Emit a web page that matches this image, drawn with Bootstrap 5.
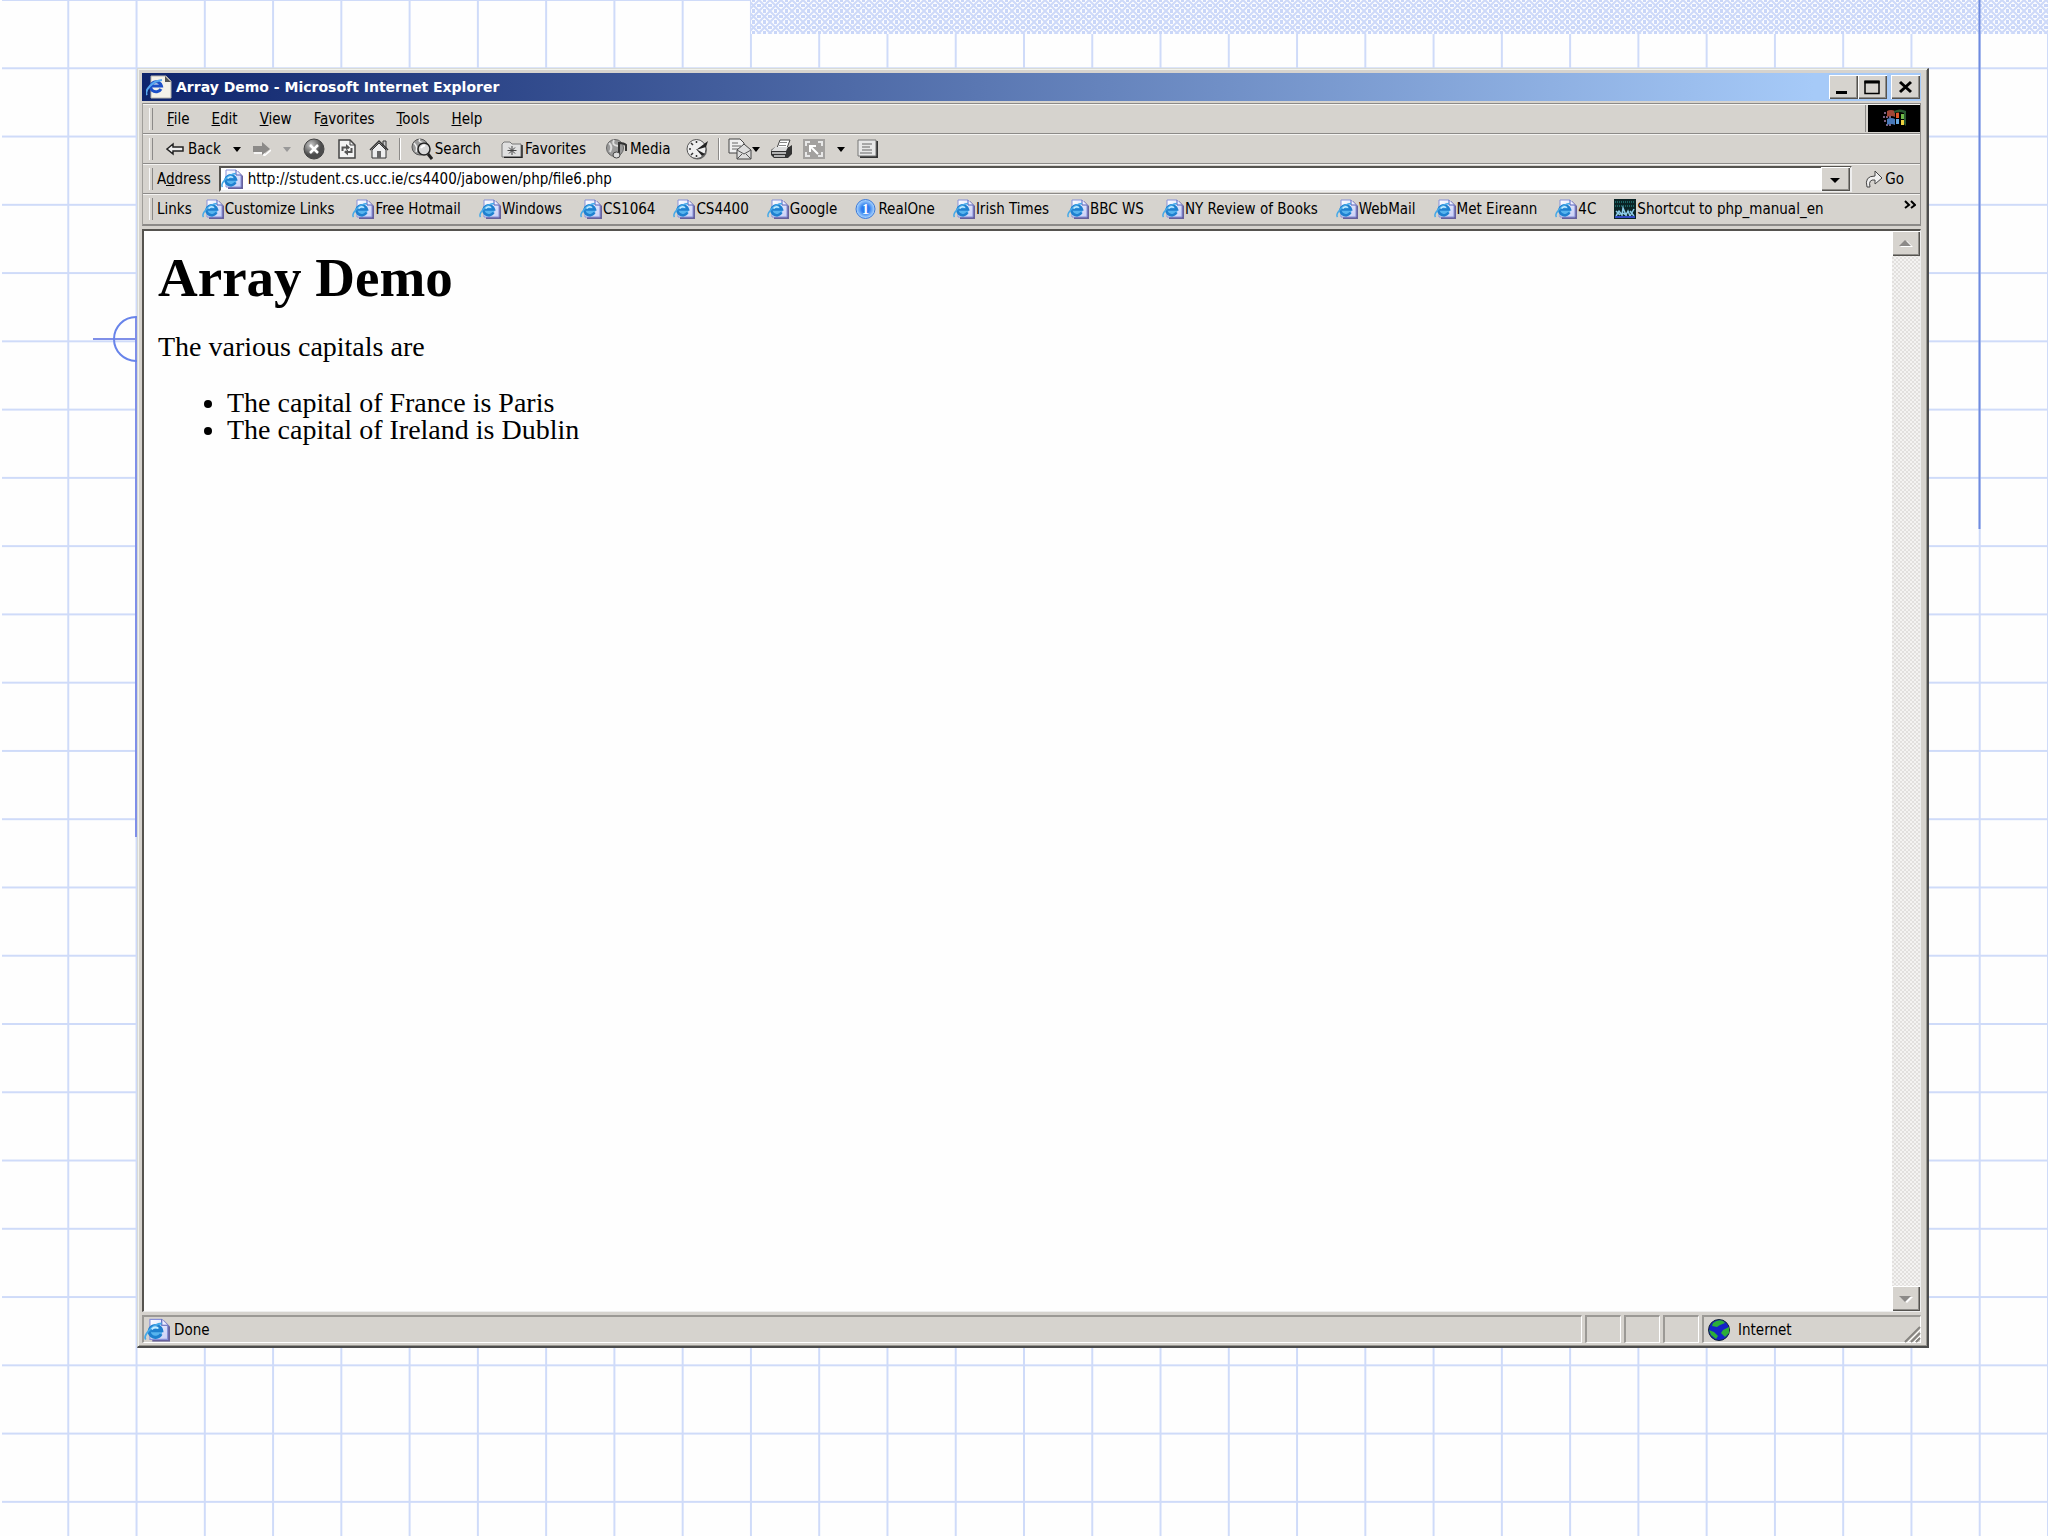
<!DOCTYPE html>
<html lang="en">
<head>
<meta charset="utf-8">
<meta name="viewport" content="width=device-width, initial-scale=1">
<title>Array Demo - Microsoft Internet Explorer</title>
<link href="https://cdn.jsdelivr.net/npm/bootstrap@5.3.0/dist/css/bootstrap.min.css" rel="stylesheet">
<style>
  :root { --cell: calc(100vw / 30); --face: #d6d3ce; --shade: #8c8a88; --dark: #55534f; }
  body {
    font-family: "DejaVu Sans Condensed", "DejaVu Sans", sans-serif; font-stretch: condensed;
    font-size: 15px; line-height: 20px; color: #000;
    background-color: #fefefe;
    background-image:
      linear-gradient(to left, #cfdbf9 2px, transparent 2px),
      linear-gradient(to top, #cfdbf9 2px, transparent 2px);
    background-size: var(--cell) var(--cell);
    background-position: 1px 1px;
    padding: 68px 119px 188px 137px;
  }
  .backdrop { z-index: 0; pointer-events: none; }
  .ie-window {
    z-index: 1; background: var(--face); padding: 4px 6px 3px 4px;
    border: 1px solid #d8dad6; border-right: 2px solid #4c4c4c; border-bottom: 2px solid #4c4c4c;
    box-shadow: inset 1px 1px #f1f3ee, inset -1px -1px #98968f;
  }
  .titlebar { height: 28px; background: linear-gradient(to right, #0e246c, #a6caf8 94%); color: #fff; font-family: "DejaVu Sans", sans-serif; font-stretch: normal; font-size: 14px; font-weight: 700; padding: 0 1px 0 4px; }
  button { font: inherit; color: inherit; background: none; border: 0; padding: 0; }
  .cap-btn, .bevel { width: 29px; height: 24px; background: var(--face); box-shadow: inset 1px 1px #fff, inset -1px -1px #55534f, inset -2px -2px #8f8d89; }
  .strip { height: 30px; padding-left: 6px; border-bottom: 1px solid var(--shade); box-shadow: inset 0 1px #f5f4f2; }
  .strip::before { content: ""; flex: none; width: 4px; height: 22px; border-right: 1px solid var(--shade); box-shadow: inset 1px 0 #f8f8f8; }
  .bars { border: 1px solid var(--shade); border-bottom: 2px solid #8c8a88; border-left-color: #a09e9a; margin-top: 2px; }
  .menus { gap: 22px; padding-left: 14px; }
  .tool { margin-left: 13px; }
  .tool-near { margin-left: 10px; }
  .tool-wide { margin-left: 20px; }
  .tool-text { gap: 2px; }
  .brand { width: 52px; height: 27px; background: #000; }
  .brandbox { border-left: 1px solid var(--shade); padding-left: 2px; }
  .divider { width: 2px; height: 22px; margin: 0 10px; background: linear-gradient(to right, var(--shade) 50%, #fff 50%); }
  .addr { height: 26px; background: #fff; border: 2px solid var(--dark); border-right-color: #eee; border-bottom-color: #eee; }
  .addr input { border: 0; outline: 0; padding: 0 0 0 5px; background: transparent; font: inherit; min-width: 0; }
  .links { gap: 18px; padding-left: 10px; }
  .links a { color: #000; text-decoration: none; white-space: nowrap; display: flex; align-items: center; gap: 1px; }
  .badge-one { font-family: "Liberation Serif", serif; font-size: 14px; font-weight: 700; fill: #fff; }
  .viewport { border: 2px solid var(--dark); border-right: 1px solid #eee; border-bottom: 1px solid #eee; background: #fefefe; margin-top: 3px; }
  .doc { font-family: "Liberation Serif", serif; font-stretch: normal; font-size: 28px; line-height: 27px; padding: 16px 14px; }
  .doc h1 { font-size: 55px; line-height: 62px; font-weight: 700; margin: 0 0 24px; }
  .doc p { margin: 0 0 29px; }
  .doc ul { padding-left: 69px; margin: 0; }
  .scroller { width: 28px; background: repeating-conic-gradient(#e2e0de 0 25%, #f4f3f2 0 50%) 0 0 / 4px 4px; }
  .scroller .bevel { width: 28px; height: 25px; }
  .status { gap: 3px; margin-top: 3px; height: 28px; }
  .pane { border: 1px solid #fff; border-top: 2px solid #9b9995; border-left: 2px solid #9b9995; }
  .pane-sm { width: 36px; }
  .pane-zone { width: 219px; }
  .grip { right: 0; bottom: 0; }
</style>
<script src="https://cdn.jsdelivr.net/npm/bootstrap@5.3.0/dist/js/bootstrap.bundle.min.js"></script>
</head>
<body class="min-vh-100 d-flex flex-column position-relative m-0">

<svg width="0" height="0" class="position-absolute" aria-hidden="true">
  <defs>
    <pattern id="weave" width="11" height="11" patternUnits="userSpaceOnUse">
      <rect width="11" height="11" fill="#fbfcff"/>
      <path d="M0 0L11 11M11 0L0 11" stroke="#cdd9f9" stroke-width="2"/>
      <path d="M4 0h3v2h-3zM4 9h3v2h-3zM0 4h2v3H0zM9 4h2v3H9z" fill="#c9d6f8"/>
    </pattern>
    <linearGradient id="pg" x1="0" x2="1" y2="1"><stop offset="0" stop-color="#fff"/><stop offset="1" stop-color="#c6cdf6"/></linearGradient>
    <radialGradient id="ball" cx=".35" cy=".3"><stop offset="0" stop-color="#ccc"/><stop offset="1" stop-color="#4c4c4c"/></radialGradient>
    <radialGradient id="one" cx=".5" cy=".5"><stop offset=".4" stop-color="#2c7cf0"/><stop offset="1" stop-color="#b4dcff"/></radialGradient>
    <symbol id="ie" viewBox="0 0 22 20">
      <path d="M7 2h10l5 5v13H7z" fill="#66619c"/>
      <path d="M5 1h10l5 5v12H5z" fill="url(#pg)" stroke="#8790d8"/>
      <path d="M15 1v5h5" fill="#eef" stroke="#5560b8"/>
      <circle cx="9.500" cy="11.500" r="6" fill="#58b4ee"/>
      <path d="M14.500 13.500A5.300 5 0 1 1 15 10.500H6" fill="none" stroke="#1f80cf" stroke-width="2.600"/>
      <path d="M1.500 18C-1 15 7 5 15 4.500" fill="none" stroke="#45a9e8" stroke-width="1.500"/>
      <path d="M6.500 9.500Q9 6.500 12 8.500" fill="none" stroke="#c4ecff" stroke-width="1.500"/>
    </symbol>
  </defs>
</svg>

<svg class="backdrop position-absolute top-0 start-0 w-100 h-100" aria-hidden="true">
  <rect width="2" height="100%" fill="#fefefe"/>
  <rect x="751" width="1297" height="34" fill="url(#weave)"/>
  <path d="M1979.500 0V529" stroke="#6f8be0" stroke-width="2"/>
  <path d="M93 339H136M136 317V837" stroke="#7f8fe8" stroke-width="2"/>
  <circle cx="136" cy="339" r="22" fill="none" stroke="#6884ea" stroke-width="2"/>
</svg>

<main class="ie-window position-relative flex-grow-1 d-flex flex-column">
  <header class="titlebar d-flex align-items-center">
    <svg width="26" height="24" viewBox="0 0 26 24" aria-hidden="true"><path d="M5 1h15l5 5v17H5z" fill="#f4f2ea" stroke="#b8b6ae"/><path d="M19 1v6h6" fill="#555"/><path d="M15 14A5.500 5 0 1 1 15.500 11H6" fill="none" stroke="#1c50c8" stroke-width="3"/><path d="M1 20C-2 16 6 6 16 5" fill="none" stroke="#58a8f0" stroke-width="2"/></svg>
    <span class="ms-1 flex-grow-1">Array Demo - Microsoft Internet Explorer</span>
    <button class="cap-btn" aria-label="Minimize"><svg class="d-block" width="28" height="24"><path d="M7 17.500h11" stroke="#000" stroke-width="3"/></svg></button>
    <button class="cap-btn" aria-label="Maximize"><svg class="d-block" width="28" height="24"><path d="M7 6.500h14v12H7z" fill="none" stroke="#000" stroke-width="1.500"/><path d="M6.500 7h15" stroke="#000" stroke-width="3"/></svg></button>
    <button class="cap-btn ms-1" aria-label="Close"><svg class="d-block" width="28" height="24"><path d="M9 7l11 10M20 7L9 17" stroke="#000" stroke-width="3"/></svg></button>
  </header>

  <div class="bars">
    <div class="strip d-flex align-items-center">
      <nav class="menus d-flex flex-grow-1" aria-label="Menu bar">
        <button><u>F</u>ile</button><button><u>E</u>dit</button><button><u>V</u>iew</button><button>F<u>a</u>vorites</button><button><u>T</u>ools</button><button><u>H</u>elp</button>
      </nav>
      <div class="brandbox"><svg class="brand d-block" viewBox="0 0 52 27" role="img" aria-label="Windows"><path d="M16 8h8M15 12h9M16 16h8M18 20h6" stroke="#7a6080" stroke-width="2" stroke-dasharray="2 1"/><path d="M19 6q4-2 8 0v6q-4-2-8 0z" fill="#a04838"/><path d="M19 14q4-2 8 0v6q-4-2-8 0z" fill="#4878b8"/><path d="M26 6q6-3 12 0v15l-2-2V8q-5-2-10 0z" fill="#285830"/><path d="M28 8q3-1 3 0v5h-3z" fill="#e05828"/><path d="M33 9h3v5h-3z" fill="#70b848"/><path d="M28 14h3v5h-3z" fill="#68a8e0"/><path d="M33 15h3v5h-3z" fill="#ecd040"/></svg></div>
    </div>

    <div class="strip d-flex align-items-center">
      <button class="d-flex align-items-center tool"><svg class="me-1" width="18" height="14" viewBox="0 0 18 14"><path d="M1 7l6-5v3h10v4H7v3z" fill="#eee" stroke="#222" stroke-width="1.500"/></svg>Back</button>
      <button class="ms-2" aria-label="Back history"><svg class="mx-1" width="8" height="5"><path d="M0 0h8L4 5z"/></svg></button>
      <button class="ms-2" aria-label="Forward"><svg width="18" height="14"><path d="M1 11h10v3l7-6" fill="none" stroke="#fff" stroke-width="1.500"/><path d="M0 4h9V0l8 7-8 6V10H0z" fill="#8c8a88"/></svg></button>
      <button class="ms-2" aria-label="Forward history"><svg class="mx-1" width="8" height="5"><path d="M0 0h8L4 5z" fill="#999"/></svg></button>
      <button class="ms-2" aria-label="Stop"><svg width="22" height="22"><circle cx="11" cy="11" r="10" fill="url(#ball)" stroke="#444"/><path d="M7 7l8 8M15 7l-8 8" stroke="#fff" stroke-width="2.500"/></svg></button>
      <button class="tool" aria-label="Refresh"><svg width="18" height="20"><path d="M1 1h11l5 5v13H1z" fill="#f3f3f3" stroke="#444" stroke-width="1.500"/><path d="M12 1v5h5" fill="none" stroke="#444"/><path d="M4.500 12V8.500H9M13.500 9v4H9" fill="none" stroke="#555" stroke-width="2"/><path d="M8 5l4 3.500L8 12zM10 9.500L6 13l4 3.500z" fill="#555"/></svg></button>
      <button class="tool" aria-label="Home"><svg width="20" height="20"><path d="M14 7V2h3v8" fill="#ccc" stroke="#333"/><path d="M3 11v8h14v-8l-7-7z" fill="#eee" stroke="#333"/><path d="M1 11l9-9 9 9" fill="none" stroke="#333" stroke-width="1.500"/><path d="M8 12h4v7H8z" fill="#666"/></svg></button>
      <span class="divider"></span>
      <button class="d-flex align-items-center tool-text"><svg width="22" height="22"><circle cx="9" cy="9" r="8" fill="#999" stroke="#555"/><path d="M3 5q4 4 2 9M9 1q-3 3 5 4" fill="none" stroke="#eee" stroke-width="1.500"/><circle cx="13" cy="11" r="6" fill="#d8d8d8" stroke="#222" stroke-width="1.500"/><path d="M10 10q2-3 4-2" fill="none" stroke="#fff" stroke-width="2"/><path d="M17 16l4 5" stroke="#222" stroke-width="3"/></svg>Search</button>
      <button class="d-flex align-items-center tool-text tool-wide"><svg width="22" height="18"><path d="M1 17V4l2-2h6l2 2h9v13z" fill="#e0e0e0" stroke="#777"/><path d="M21 5v12.500H3" fill="none" stroke="#222" stroke-width="1.500"/><path d="M11 6v9M6.500 10.500h9M8 7.500l6 6M14 7.500l-6 6" stroke="#444"/></svg>Favorites</button>
      <button class="d-flex align-items-center tool-text tool-wide"><svg width="22" height="22"><circle cx="9" cy="10" r="8.500" fill="#9a9a9a" stroke="#666"/><path d="M3 5q4 3 1 9M8 2q-3 5 4 6" fill="none" stroke="#ddd" stroke-width="2"/><path d="M13 17V5q5 0 7 2v6" fill="none" stroke="#333" stroke-width="2"/><ellipse cx="10.500" cy="17" rx="3.500" ry="3" fill="#ddd" stroke="#444"/></svg>Media</button>
      <button class="ms-3" aria-label="History"><svg width="24" height="22"><circle cx="11.500" cy="12" r="9.500" fill="#666"/><circle cx="10.500" cy="11" r="9.500" fill="#eee" stroke="#555"/><path d="M10.500 3v2M10.500 17v2M3 11h2M5 5l2 2M5 17l2-2" stroke="#333" stroke-width="1.500"/><path d="M10 12L22 3l-2 6zM10 11l9 5-3 2z" fill="#222"/></svg></button>
      <span class="divider mx-2"></span>
      <button aria-label="Mail"><svg width="24" height="22"><path d="M1 1h11l4 4v10H1z" fill="#f0f0f0" stroke="#444"/><path d="M4 5h6M4 8h9M4 11h6" stroke="#666"/><path d="M9 12l7-6 7 6v9H9z" fill="#ddd" stroke="#444"/><path d="M9 12l7 4 7-4M9 21l5-5M23 21l-5-5" fill="none" stroke="#555"/></svg></button>
      <button aria-label="Mail options"><svg width="8" height="5"><path d="M0 0h8L4 5z"/></svg></button>
      <button class="tool-near" aria-label="Print"><svg width="23" height="20"><path d="M7 9l3-8h10l-3 8z" fill="#fff" stroke="#444"/><path d="M10 3.500h7M9 6.500h7" stroke="#888"/><path d="M1 11l4-3h14l3-2v9l-4 4H4l-3-3z" fill="#333"/><path d="M1 12l4-4h13l-2 4z" fill="#ddd"/><path d="M2 14h14M4 17h11" stroke="#ddd" stroke-width="1.500"/></svg></button>
      <button class="tool-near" aria-label="Edit"><svg width="22" height="20"><path d="M0 0h22v20H0z" fill="#a3a19f"/><path d="M3 7V3h4M15 3h4v4M19 13v4h-4M7 17H3v-4" fill="none" stroke="#e8e8e8" stroke-width="2"/><path d="M15 15L8 8M7 13V7h6" fill="none" stroke="#fff" stroke-width="2"/></svg></button>
      <button class="ms-2" aria-label="Edit options"><svg class="mx-1" width="8" height="5"><path d="M0 0h8L4 5z"/></svg></button>
      <button class="ms-2" aria-label="Discuss"><svg width="22" height="20"><path d="M3 2h18v17H3z" fill="#333"/><path d="M1 1h18v16H1z" fill="#e8e8e8" stroke="#777"/><path d="M5 5h10M5 8h8M5 11h10M3 14h12" stroke="#666"/></svg></button>
    </div>

    <div class="strip d-flex align-items-center">
      <label for="url" class="mx-1 flex-shrink-0">A<u>d</u>dress</label>
      <div class="addr d-flex align-items-center flex-grow-1 ms-1">
        <svg class="flex-shrink-0" width="22" height="20"><use href="#ie"/></svg>
        <input id="url" class="flex-grow-1" type="text" value="http://student.cs.ucc.ie/cs4400/jabowen/php/file6.php">
        <button class="bevel" aria-label="Show addresses"><svg class="d-block" width="28" height="24"><path d="M9 11h10l-5 5z"/></svg></button>
      </div>
      <button class="d-flex align-items-center tool-text tool me-3"><svg width="18" height="18"><path d="M2 17Q-1 6 10 6V1l7 7-7 6v-4q-7-1-5 7z" fill="#f0f0f0" stroke="#444"/></svg>Go</button>
    </div>

    <div class="strip border-bottom-0 d-flex align-items-center">
      <span class="ms-1">Links</span>
      <nav class="links d-flex flex-grow-1" aria-label="Links">
        <a href="#"><svg width="22" height="20"><use href="#ie"/></svg>Customize Links</a>
        <a href="#"><svg width="22" height="20"><use href="#ie"/></svg>Free Hotmail</a>
        <a href="#"><svg width="22" height="20"><use href="#ie"/></svg>Windows</a>
        <a href="#"><svg width="22" height="20"><use href="#ie"/></svg>CS1064</a>
        <a href="#"><svg width="22" height="20"><use href="#ie"/></svg>CS4400</a>
        <a href="#"><svg width="22" height="20"><use href="#ie"/></svg>Google</a>
        <a href="#"><svg width="22" height="20"><circle cx="10.500" cy="10" r="9.500" fill="url(#one)" stroke="#3a78d8"/><text class="badge-one" x="7" y="15">1</text></svg>RealOne</a>
        <a href="#"><svg width="22" height="20"><use href="#ie"/></svg>Irish Times</a>
        <a href="#"><svg width="22" height="20"><use href="#ie"/></svg>BBC WS</a>
        <a href="#"><svg width="22" height="20"><use href="#ie"/></svg>NY Review of Books</a>
        <a href="#"><svg width="22" height="20"><use href="#ie"/></svg>WebMail</a>
        <a href="#"><svg width="22" height="20"><use href="#ie"/></svg>Met Eireann</a>
        <a href="#"><svg width="22" height="20"><use href="#ie"/></svg>4C</a>
        <a href="#"><svg width="22" height="20"><path d="M0 0h22v20H0z" fill="#0a2426"/><path d="M1 3h20M1 7h20" stroke="#1c6464" stroke-width="2" stroke-dasharray="1 1"/><path d="M2 17l3-5 3 4 1-7 3 7 2-4 2 5 4-7M2 12l4 4M9 14l4 3M16 12l4 5" fill="none" stroke="#8ccbe8" stroke-width="1.500"/><path d="M1 18h20" stroke="#3048c0" stroke-width="2"/></svg>Shortcut to php_manual_en</a>
      </nav>
      <button class="align-self-start me-1" aria-label="More links"><svg width="12" height="20"><path d="M1 6l4 4-4 3M7 6l4 4-4 3" fill="none" stroke="#000" stroke-width="2"/></svg></button>
    </div>
  </div>

  <div class="viewport flex-grow-1 d-flex">
    <article class="doc flex-grow-1">
      <h1>Array Demo</h1>
      <p>The various capitals are</p>
      <ul><li>The capital of France is Paris</li><li>The capital of Ireland is Dublin</li></ul>
    </article>
    <div class="scroller d-flex flex-column justify-content-between">
      <button class="bevel" aria-label="Scroll up"><svg class="d-block" width="27" height="25"><path d="M8 16h13l-6-6z" fill="#fff"/><path d="M7 15h12l-6-6z" fill="#8c8a88"/></svg></button>
      <button class="bevel" aria-label="Scroll down"><svg class="d-block" width="27" height="25"><path d="M8 11h13l-6 6z" fill="#fff"/><path d="M7 10h12l-6 6z" fill="#8c8a88"/></svg></button>
    </div>
  </div>

  <footer class="status d-flex position-relative">
    <div class="pane flex-grow-1 d-flex align-items-center"><svg class="me-1" width="26" height="24" viewBox="0 0 22 20"><use href="#ie"/></svg>Done</div>
    <div class="pane pane-sm"></div><div class="pane pane-sm"></div><div class="pane pane-sm"></div>
    <div class="pane pane-zone d-flex align-items-center"><svg class="ms-1 me-2" width="22" height="22"><circle cx="11" cy="11" r="10.500" fill="#1420c8" stroke="#123"/><path d="M5 4q5-4 10-2l2 2-5 2-3 2-5-1zM1 11l5 2 4 4-2 3-5-4zM21 8l-6 3-2 3 4 4 4-4z" fill="#2cae38"/></svg>Internet</div>
    <svg class="grip position-absolute" width="18" height="18" aria-hidden="true"><path d="M2 17L17 2M8 17l9-9M13 17l4-4" stroke="#85837f" stroke-width="2"/><path d="M4 18L18 4M10 18l8-8" stroke="#fff"/></svg>
  </footer>
</main>
</body>
</html>
